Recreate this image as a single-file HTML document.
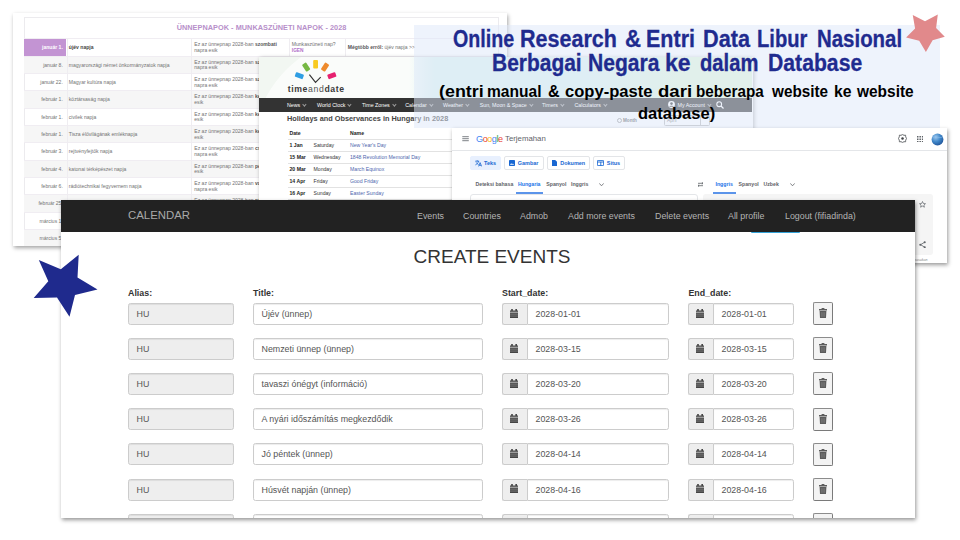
<!DOCTYPE html>
<html lang="id">
<head>
<meta charset="utf-8">
<title>Online Research &amp; Entri Data Libur Nasional</title>
<style>
*{box-sizing:border-box;margin:0;padding:0}
html,body{width:960px;height:540px;overflow:hidden;background:#fff}
body{position:relative;font-family:"Liberation Sans",sans-serif}
.abs{position:absolute}
.shot{position:absolute;background:#fff;overflow:hidden}

/* ---------- Hungarian table screenshot ---------- */
#hu{left:13px;top:13px;width:494px;height:233px;box-shadow:1px 1.500px 4px rgba(0,0,0,.36)}
#hu span,#hu div{position:absolute}
#hu .frame{left:10.8px;top:4.2px;width:475px;height:260px;border:1px solid #ecebee}
#hu .ttl{left:0;width:497px;top:9.5px;text-align:center;font-size:7.3px;line-height:10px;font-weight:bold;color:#b78fca;letter-spacing:.05px;white-space:nowrap}
#hu .row{left:11.3px;width:474px;height:17.35px;border-top:1px solid #f0edf2}
#hu .row.g{background:#f6f6f6}
#hu .row span{font-size:5.05px;color:#727272;white-space:nowrap;line-height:5.7px}
#hu .row b{font-weight:bold;color:#555}
#hu .c1{right:435.5px;top:6px;text-align:right}
#hu .c2{left:44.5px;top:6px}
#hu .c3{left:170px;top:3px}
#hu .c4{left:267.5px;top:3px}
#hu .c5{left:323.5px;top:6px}
#hu .vl{top:26px;height:240px;width:1px;background:#efedf1}
/* ---------- timeanddate screenshot ---------- */
#tad{left:259px;top:57px;width:493.500px;height:160px;box-shadow:.5px 1px 4px rgba(0,0,0,.34)}

/* ---------- title overlay ---------- */
#ov{left:414px;top:25px;width:526px;height:102.500px;background:rgba(222,232,250,.52)}

/* ---------- google translate ---------- */
#gt{left:452px;top:128px;width:495px;height:135px;box-shadow:1px 1.5px 4px rgba(0,0,0,.4)}

/* ---------- main panel ---------- */
#main{left:61px;top:200px;width:854px;height:318px;box-shadow:1px 1.5px 4px rgba(0,0,0,.42)}

#main .nav{position:absolute;left:0;top:0;width:100%;height:32px;background:#222}
#main .nav span{position:absolute;top:0;height:32px;line-height:32px;font-size:8.85px;color:#b4b4b4;white-space:nowrap}
#main .nav .brand{left:67px;font-size:11.4px;color:#a8a8a8;line-height:31px}
#main h2{position:absolute;left:0;width:100%;top:45px;text-align:center;font-weight:normal;font-size:19px;line-height:24px;color:#333;padding-left:8px}
#main .lb{position:absolute;top:88px;font-size:8.85px;font-weight:bold;color:#333;line-height:10px}
#main .in{position:absolute;height:22px;border:1px solid #ccc;border-radius:2.5px;background:#fff;font-size:8.85px;color:#555;line-height:20px;padding-left:7.5px;white-space:nowrap;box-shadow:inset 0 1px 1px rgba(0,0,0,.075)}
#main .in.dis{background:#eee}
#main .ad{position:absolute;height:22px;width:25px;border:1px solid #ccc;border-right:0;border-radius:2.5px 0 0 2.5px;background:#eee}
#main .in.r{border-radius:0 2.5px 2.5px 0}
#main .ad svg{position:absolute;left:6.8px;top:4.8px}
#main .bt{position:absolute;left:752px;width:20px;height:23px;border:1.4px solid #8c8c8c;border-radius:2px;background:#f3f3f3;border-bottom-color:#7a7a7a;border-right-color:#7a7a7a}
#main .bt svg{position:absolute;left:4.700px;top:5.100px}

/* ---------- title + stars ---------- */
.t1,.t2{position:absolute;left:414px;width:525px;text-align:center;white-space:nowrap;font-weight:bold}
.t1{font-size:22.3px;line-height:23px;color:#1f2b8f;letter-spacing:-.5px}
.t2{font-size:17px;line-height:21px;color:#000;letter-spacing:-.3px}
.w1,.w2{position:absolute;white-space:nowrap;font-weight:bold;transform-origin:0 0;display:block}
.w1{font-size:23px;line-height:23px;color:#1f2b8f;-webkit-text-stroke:.3px #1f2b8f}
.w2{font-size:16.5px;line-height:21px;color:#000}
#stars{position:absolute;left:0;top:0}

#gt span,#gt div,#gt svg{position:absolute}
#gt .t{white-space:nowrap;line-height:10px}
#gt .btn{height:13.5px;top:28px;border:1px solid #e3e5e8;border-radius:2px;background:#fff}
#gt .btn b{position:absolute;top:1.2px;font-size:5.45px;line-height:10px;color:#1967d2;font-weight:bold;white-space:nowrap}
#gt .lg{font-size:5.2px;color:#5f6368;top:50.6px;font-weight:bold}

#tad span,#tad div,#tad svg{position:absolute}
#tad .hd{left:0;top:0;width:493px;height:41px;background:linear-gradient(90deg,rgba(222,244,240,0) 150px,#def4f0 175px,#def4f0 330px,#e3f8dc 420px,#e3f8dc 100%),radial-gradient(circle 117px at 110px 95px,#fafcfa 99.4%,#f2f7f2 100%)}
#tad .nv{left:0;top:40.7px;width:493px;height:14px;background:#333}
#tad .nv span{top:0;line-height:14px;font-size:5.3px;color:#fff;white-space:nowrap}
#tad .nv span:after{content:"";display:inline-block;width:1.8px;height:1.8px;border-right:.5px solid #999;border-bottom:.5px solid #999;transform:rotate(45deg);margin-left:3px;position:relative;top:-1.3px}
#tad .h1{left:28px;top:57px;font-size:7.35px;font-weight:bold;color:#454545;line-height:10px;white-space:nowrap}
#tad .tr{left:28.500px;width:440px;height:1px;background:#e2e2e2}
#tad .td{font-size:5.15px;line-height:8px;color:#333;white-space:nowrap}
#tad .td.b{font-weight:bold;color:#222}
#tad .td.a{color:#4d66ad}
</style>
</head>
<body>

<div id="hu" class="shot"><div class="frame"></div>
<span class="ttl">ÜNNEPNAPOK - MUNKASZÜNETI NAPOK - 2028</span>
<div class="row" style="top:25.30px"><div style="left:0;top:0;width:42px;height:17px;background:#c394d3"></div><span class="c1" style="color:#fff;font-weight:bold">január 1.</span><span class="c4">Munkaszüneti nap?<br><span style="position:static;color:#b070c8;font-weight:bold;font-size:4.8px">IGEN</span></span><span class="c5"><b>Mégtöbb erről:</b> újév napja &gt;&gt;</span><span class="c2"><b style="color:#444">újév napja</b></span><span class="c3">Ez az ünnepnap 2028-ban <b>szombati</b><br>napra esik</span></div>
<div class="row g" style="top:42.63px"><span class="c1">január 8.</span><span class="c2">magyarországi német önkormányzatok napja</span><span class="c3">Ez az ünnepnap 2028-ban <b>szombati</b><br>napra esik</span></div>
<div class="row" style="top:59.96px"><span class="c1">január 22.</span><span class="c2">Magyar kultúra napja</span><span class="c3">Ez az ünnepnap 2028-ban <b>szombati</b><br>napra esik</span></div>
<div class="row g" style="top:77.29px"><span class="c1">február 1.</span><span class="c2">köztársaság napja</span><span class="c3">Ez az ünnepnap 2028-ban <b>keddi</b> napra<br>esik</span></div>
<div class="row" style="top:94.62px"><span class="c1">február 1.</span><span class="c2">civilek napja</span><span class="c3">Ez az ünnepnap 2028-ban <b>keddi</b> napra<br>esik</span></div>
<div class="row g" style="top:111.95px"><span class="c1">február 1.</span><span class="c2">Tisza élővilágának emléknapja</span><span class="c3">Ez az ünnepnap 2028-ban <b>keddi</b> napra<br>esik</span></div>
<div class="row" style="top:129.28px"><span class="c1">február 3.</span><span class="c2">rejtvényfejtők napja</span><span class="c3">Ez az ünnepnap 2028-ban <b>csütörtöki</b><br>napra esik</span></div>
<div class="row g" style="top:146.61px"><span class="c1">február 4.</span><span class="c2">katonai térképészet napja</span><span class="c3">Ez az ünnepnap 2028-ban <b>pénteki</b> napra<br>esik</span></div>
<div class="row" style="top:163.94px"><span class="c1">február 6.</span><span class="c2">rádiótechnikai fegyvernem napja</span><span class="c3">Ez az ünnepnap 2028-ban <b>vasárnapi</b><br>napra esik</span></div>
<div class="row g" style="top:181.27px"><span class="c1">február 25.</span><span class="c2">a kommunista diktatúrák áldozatainak emléknapja</span><span class="c3">Ez az ünnepnap 2028-ban <b>pénteki</b> napra<br>esik</span></div>
<div class="row" style="top:198.60px"><span class="c1">március 1.</span><span class="c2">a polgári védelem napja</span><span class="c3">Ez az ünnepnap 2028-ban <b>szerdai</b><br>napra esik</span></div>
<div class="row g" style="top:215.93px"><span class="c1">március 5.</span><span class="c2">energiatakarékossági világnap</span><span class="c3">Ez az ünnepnap 2028-ban <b>vasárnapi</b><br>napra esik</span></div>
<div class="vl" style="left:54px"></div>
<div class="vl" style="left:178.200px"></div>
<div class="vl" style="left:276px"></div>
<div class="vl" style="left:332px"></div></div>
<div id="tad" class="shot"><div class="hd"></div>
<svg style="left:0;top:0" width="120" height="41" viewBox="0 0 120 41"><g transform="translate(56.6 24.6)"><rect x="-2.4" y="-4.2" width="4.8" height="8.4" rx=".9" fill="#2f9ee3" transform="rotate(-70) translate(0 -17.3)"/><rect x="-2.4" y="-4.2" width="4.8" height="8.4" rx=".9" fill="#76b843" transform="rotate(-33) translate(0 -17.3)"/><rect x="-2.4" y="-4.2" width="4.8" height="8.4" rx=".9" fill="#f8ca1f" transform="rotate(0) translate(0 -17.3)"/><rect x="-2.4" y="-4.2" width="4.8" height="8.4" rx=".9" fill="#ee8a2c" transform="rotate(33) translate(0 -17.3)"/><rect x="-2.4" y="-4.2" width="4.8" height="8.4" rx=".9" fill="#e6216f" transform="rotate(70) translate(0 -17.3)"/><path d="M-6.2 -7L-.1 .7L5.100 -4.500" fill="none" stroke="#333" stroke-width="1.150"/></g></svg>
<span style="left:28.700px;top:27.300px;font-size:8.700px;line-height:11px;color:#3a3a3a;white-space:nowrap;letter-spacing:.62px"><b style="position:static">time</b><span style="position:static;color:#555">and</span><b style="position:static">date</b></span>
<div class="nv"><span style="left:28px">News</span><span style="left:58px">World Clock</span><span style="left:103px">Time Zones</span><span style="left:146.2px">Calendar</span><span style="left:184px">Weather</span><span style="left:220.7px">Sun, Moon &amp; Space</span><span style="left:283px">Timers</span><span style="left:315.5px">Calculators</span><svg style="left:408.5px;top:3.500px" width="7" height="7" viewBox="0 0 7 7"><circle cx="3.5" cy="3.500" r="3.400" fill="#fff"/><circle cx="3.500" cy="2.600" r="1.300" fill="#333"/><path d="M1.200 5.800c.5-1.300 4.100-1.300 4.600 0" fill="#333"/></svg><span style="left:418.500px">My Account</span><svg style="left:457px;top:3px" width="8" height="8" viewBox="0 0 8 8"><circle cx="3.200" cy="3.200" r="2.400" fill="none" stroke="#fff" stroke-width="1.100"/><path d="M5 5l2.500 2.500" stroke="#fff" stroke-width="1.300"/></svg></div>
<span class="h1">Holidays and Observances in Hungary in 2028</span>
<span class="td b" style="left:30.5px;top:72px">Date</span><span class="td b" style="left:91px;top:72px">Name</span>
<div style="left:357.5px;top:61px;width:5px;height:5px;border:.7px solid #999;border-radius:50%"></div><span class="td b" style="left:364px;top:59.500px;font-size:4.600px;color:#555">Month</span>
<div style="left:405px;top:58px;width:46px;height:11px;border:.7px solid #bbb;border-radius:1.500px"></div><span class="td" style="left:408px;top:60px;font-size:4.800px;color:#777">April</span><div style="left:441px;top:58px;width:.7px;height:11px;background:#bbb"></div>
<div class="tr" style="top:81.5px"></div><span class="td b" style="left:30.500px;top:84.0px">1 Jan</span><span class="td" style="left:54.500px;top:84.0px">Saturday</span><span class="td a" style="left:91px;top:84.0px">New Year's Day</span>
<div class="tr" style="top:93.6px"></div><span class="td b" style="left:30.500px;top:96.1px">15 Mar</span><span class="td" style="left:54.500px;top:96.1px">Wednesday</span><span class="td a" style="left:91px;top:96.1px">1848 Revolution Memorial Day</span>
<div class="tr" style="top:105.7px"></div><span class="td b" style="left:30.500px;top:108.2px">20 Mar</span><span class="td" style="left:54.500px;top:108.2px">Monday</span><span class="td a" style="left:91px;top:108.2px">March Equinox</span>
<div class="tr" style="top:117.8px"></div><span class="td b" style="left:30.500px;top:120.3px">14 Apr</span><span class="td" style="left:54.500px;top:120.3px">Friday</span><span class="td a" style="left:91px;top:120.3px">Good Friday</span>
<div class="tr" style="top:129.9px"></div><span class="td b" style="left:30.500px;top:132.4px">16 Apr</span><span class="td" style="left:54.500px;top:132.4px">Sunday</span><span class="td a" style="left:91px;top:132.4px">Easter Sunday</span>
<div class="tr" style="top:142px"></div></div>
<div id="ov" class="abs"></div>
<div id="gt" class="shot">
<svg style="left:10px;top:8px" width="8" height="6" viewBox="0 0 8 6"><path stroke="#767a7f" stroke-width=".95" d="M.3 .7h6.500M.3 2.700h6.500M.3 4.700h6.500"/></svg>
<span class="t" style="left:24px;top:5.5px;font-size:9.1px;letter-spacing:-.45px"><span style="position:static;color:#4285f4">G</span><span style="position:static;color:#ea4335">o</span><span style="position:static;color:#fbbc05">o</span><span style="position:static;color:#4285f4">g</span><span style="position:static;color:#34a853">l</span><span style="position:static;color:#ea4335">e</span></span>
<span class="t" style="left:53px;top:5.6px;font-size:7.8px;color:#5f6368">Terjemahan</span>
<div style="left:0;top:21.5px;width:495px;height:1px;background:#e4e6e9"></div>
<div class="btn" style="left:18px;width:31px;background:#e8f0fe;border-color:#e8f0fe"><svg style="left:4px;top:3px" width="7" height="6.5" viewBox="0 0 7 6.5"><path fill="none" stroke="#1967d2" stroke-width=".8" d="M.2 1.2h4M2.2 .2v1M3.6 1.2C3.2 3 1.8 4.2 .4 4.9M1.2 2.4c.5 1 1.4 1.7 2.4 2.2M3.6 6.4l1.5-3.8 1.5 3.8M4.1 5.3h2"/></svg><b style="left:13px">Teks</b></div>
<div class="btn" style="left:52px;width:39.5px"><svg style="left:4.200px;top:3px" width="6" height="6" viewBox="0 0 6 6"><rect width="6" height="6" rx=".8" fill="#1967d2"/><path fill="#fff" d="M.9 4.8l1.3-1.6 1 1.1.7-.8 1.2 1.3z"/></svg><b style="left:12.800px">Gambar</b></div>
<div class="btn" style="left:94.5px;width:43px"><svg style="left:4.300px;top:2.600px" width="5" height="6.5" viewBox="0 0 5 6.5"><path fill="#1967d2" d="M0 0h3.2L5 1.8v4.7H0z"/></svg><b style="left:12.800px">Dokumen</b></div>
<div class="btn" style="left:140.5px;width:32.5px"><svg style="left:3.800px;top:3px" width="7" height="6" viewBox="0 0 7 6"><rect x=".4" y=".4" width="6.2" height="5.2" rx=".7" fill="none" stroke="#1967d2" stroke-width=".9"/><path stroke="#1967d2" stroke-width=".9" d="M.4 2h6.2M3.8 2v3.6"/></svg><b style="left:13.300px">Situs</b></div>
<span class="t lg" style="left:23.5px">Deteksi bahasa</span>
<span class="t lg" style="left:66px;color:#1a73e8">Hungaria</span>
<span class="t lg" style="left:94.3px">Spanyol</span>
<span class="t lg" style="left:119px">Inggris</span>
<svg style="left:147px;top:55px" width="5" height="3.5" viewBox="0 0 5 3.5"><path fill="none" stroke="#5f6368" stroke-width=".8" d="M.3.4l2.2 2.4L4.7.4"/></svg>
<div style="left:63.5px;top:64.3px;width:27.5px;height:1.3px;background:#5b94ea"></div>
<div style="left:18px;top:66px;width:228px;height:70px;border:1px solid #e4e6e9;border-radius:3px"></div>
<svg style="left:245px;top:54px" width="7" height="5" viewBox="0 0 7 5"><path fill="none" stroke="#5f6368" stroke-width=".8" d="M1 1.3h5M4.8 .2l1.2 1.1-1.2 1.1M6 3.7H1M2.2 2.6L1 3.7l1.2 1.1"/></svg>
<span class="t lg" style="left:263.5px;color:#1a73e8">Inggris</span>
<span class="t lg" style="left:286.6px">Spanyol</span>
<span class="t lg" style="left:311.5px">Uzbek</span>
<svg style="left:338px;top:55px" width="5" height="3.5" viewBox="0 0 5 3.5"><path fill="none" stroke="#5f6368" stroke-width=".8" d="M.3.4l2.2 2.4L4.7.4"/></svg>
<div style="left:261px;top:64.3px;width:22.7px;height:1.3px;background:#5b94ea"></div>
<div style="left:251px;top:66px;width:229.5px;height:60.7px;background:#f5f5f5;border-radius:3px"></div>
<svg style="left:446.4px;top:6.2px" width="9" height="9" viewBox="0 0 9 9"><path d="M4.5 .6L6 1.300L7.600 1.200L7.700 2.800L8.500 4.500L7.700 6.200L7.600 7.800L6 7.700L4.500 8.400L3 7.700L1.400 7.800L1.300 6.200L.5 4.500L1.300 2.800L1.400 1.200L3 1.300Z" fill="none" stroke="#5a5d61" stroke-width=".9" stroke-linejoin="round"/><circle cx="4.500" cy="4.500" r="1.250" fill="#3c3f43"/></svg>
<svg style="left:465px;top:7.800px" width="6.400" height="6.400" viewBox="0 0 6.400 6.400"><path fill="#5f6368" d="M0 0h1.500v1.500H0zM2.450 0h1.500v1.500H2.450zM4.900 0H6.400v1.500H4.900zM0 2.450h1.500v1.500H0zM2.450 2.450h1.500v1.500H2.450zM4.900 2.450H6.400v1.500H4.900zM0 4.900h1.500V6.400H0zM2.450 4.900h1.500V6.400H2.450zM4.900 4.900H6.400V6.400H4.900z"/></svg>
<svg style="left:478.800px;top:4.500px" width="13" height="13" viewBox="0 0 13 13"><defs><radialGradient id="gl" cx=".35" cy=".3" r=".8"><stop offset="0" stop-color="#9cc7ee"/><stop offset=".5" stop-color="#3f86c8"/><stop offset="1" stop-color="#1d4f94"/></radialGradient></defs><circle cx="6.5" cy="6.5" r="5.900" fill="url(#gl)"/><path d="M1.500 4.500C4 3 8 5.500 11.800 4.200" stroke="#8ec0ee" stroke-width=".8" fill="none" opacity=".6"/></svg>
<svg style="left:466.5px;top:72.5px" width="7" height="7" viewBox="0 0 7 7"><path fill="none" stroke="#5f6368" stroke-width=".7" d="M3.5.5l.9 2 2.1.2-1.6 1.4.5 2.1-1.9-1.1-1.9 1.1.5-2.1L.5 2.7l2.100-.2z"/></svg>
<svg style="left:466.5px;top:112.5px" width="7" height="7.500" viewBox="0 0 7 7.500"><path fill="none" stroke="#5f6368" stroke-width=".8" d="M5.600 1.300L1.500 3.700l4.100 2.400"/><circle cx="5.700" cy="1.200" r="1.050" fill="#5f6368"/><circle cx="1.300" cy="3.700" r="1.050" fill="#5f6368"/><circle cx="5.700" cy="6.200" r="1.050" fill="#5f6368"/></svg>
<span class="t" style="left:461px;top:126.5px;font-size:3.6px;color:#888;font-style:italic">masukan</span>
</div>
<div id="main" class="shot">
<div class="nav"><span class="brand">CALENDAR</span><span style="left:356px">Events</span><span style="left:402px">Countries</span><span style="left:459px">Admob</span><span style="left:507px">Add more events</span><span style="left:594px">Delete events</span><span style="left:667px">All profile</span><span style="left:724px">Logout (fifiadinda)</span></div>
<div style="position:absolute;left:690px;top:31.500px;width:49px;height:1.600px;background:#35a3d8;border-radius:0 0 2px 2px"></div>
<h2>CREATE EVENTS</h2>
<span class="lb" style="left:67px">Alias:</span><span class="lb" style="left:192px">Title:</span><span class="lb" style="left:441px">Start_date:</span><span class="lb" style="left:627.400px">End_date:</span>
<div class="in dis" style="left:67px;top:103.0px;width:106px">HU</div><div class="in" style="left:192px;top:103.0px;width:230px">Újév (ünnep)</div><div class="ad" style="left:441px;top:103.0px"><svg width="8.2" height="9.2" viewBox="0 0 9 10"><path fill="#454545" d="M0 1.700h9V10H0zM1.300 0h1.800v2.500H1.300zM5.900 0h1.800v2.500H5.900z"/><path stroke="#eee" stroke-width=".8" d="M0 3.500h9"/><path stroke="#eee" stroke-width=".5" d="M0 5.600h9M0 7.700h9" opacity=".7"/></svg></div><div class="in r" style="left:466px;top:103.0px;width:142px">2028-01-01</div><div class="ad" style="left:627px;top:103.0px"><svg width="8.2" height="9.2" viewBox="0 0 9 10"><path fill="#454545" d="M0 1.700h9V10H0zM1.300 0h1.800v2.500H1.300zM5.900 0h1.800v2.500H5.900z"/><path stroke="#eee" stroke-width=".8" d="M0 3.500h9"/><path stroke="#eee" stroke-width=".5" d="M0 5.600h9M0 7.700h9" opacity=".7"/></svg></div><div class="in r" style="left:652px;top:103.0px;width:81px">2028-01-01</div><div class="bt" style="top:102.2px"><svg width="8" height="10" viewBox="0 0 8 10"><path fill="#5c5c5c" d="M2.6 0h2.8v1H8v1.400H0V1h2.600zM.600 3h6.800l-.4 7H1z"/><path stroke="#9a9a9a" stroke-width=".4" d="M2.700 4.200v4.600M4 4.200v4.600M5.300 4.200v4.600"/></svg></div>
<div class="in dis" style="left:67px;top:138.1px;width:106px">HU</div><div class="in" style="left:192px;top:138.1px;width:230px">Nemzeti ünnep (ünnep)</div><div class="ad" style="left:441px;top:138.1px"><svg width="8.2" height="9.2" viewBox="0 0 9 10"><path fill="#454545" d="M0 1.700h9V10H0zM1.300 0h1.800v2.500H1.300zM5.900 0h1.800v2.500H5.900z"/><path stroke="#eee" stroke-width=".8" d="M0 3.500h9"/><path stroke="#eee" stroke-width=".5" d="M0 5.600h9M0 7.700h9" opacity=".7"/></svg></div><div class="in r" style="left:466px;top:138.1px;width:142px">2028-03-15</div><div class="ad" style="left:627px;top:138.1px"><svg width="8.2" height="9.2" viewBox="0 0 9 10"><path fill="#454545" d="M0 1.700h9V10H0zM1.300 0h1.800v2.500H1.300zM5.900 0h1.800v2.500H5.900z"/><path stroke="#eee" stroke-width=".8" d="M0 3.500h9"/><path stroke="#eee" stroke-width=".5" d="M0 5.600h9M0 7.700h9" opacity=".7"/></svg></div><div class="in r" style="left:652px;top:138.1px;width:81px">2028-03-15</div><div class="bt" style="top:137.3px"><svg width="8" height="10" viewBox="0 0 8 10"><path fill="#5c5c5c" d="M2.6 0h2.8v1H8v1.400H0V1h2.600zM.600 3h6.800l-.4 7H1z"/><path stroke="#9a9a9a" stroke-width=".4" d="M2.700 4.200v4.600M4 4.200v4.600M5.300 4.200v4.600"/></svg></div>
<div class="in dis" style="left:67px;top:173.2px;width:106px">HU</div><div class="in" style="left:192px;top:173.2px;width:230px">tavaszi ónégyt (információ)</div><div class="ad" style="left:441px;top:173.2px"><svg width="8.2" height="9.2" viewBox="0 0 9 10"><path fill="#454545" d="M0 1.700h9V10H0zM1.300 0h1.800v2.500H1.300zM5.900 0h1.800v2.500H5.900z"/><path stroke="#eee" stroke-width=".8" d="M0 3.500h9"/><path stroke="#eee" stroke-width=".5" d="M0 5.600h9M0 7.700h9" opacity=".7"/></svg></div><div class="in r" style="left:466px;top:173.2px;width:142px">2028-03-20</div><div class="ad" style="left:627px;top:173.2px"><svg width="8.2" height="9.2" viewBox="0 0 9 10"><path fill="#454545" d="M0 1.700h9V10H0zM1.300 0h1.800v2.500H1.300zM5.900 0h1.800v2.500H5.900z"/><path stroke="#eee" stroke-width=".8" d="M0 3.500h9"/><path stroke="#eee" stroke-width=".5" d="M0 5.600h9M0 7.700h9" opacity=".7"/></svg></div><div class="in r" style="left:652px;top:173.2px;width:81px">2028-03-20</div><div class="bt" style="top:172.4px"><svg width="8" height="10" viewBox="0 0 8 10"><path fill="#5c5c5c" d="M2.6 0h2.8v1H8v1.400H0V1h2.600zM.600 3h6.800l-.4 7H1z"/><path stroke="#9a9a9a" stroke-width=".4" d="M2.700 4.200v4.600M4 4.200v4.600M5.300 4.200v4.600"/></svg></div>
<div class="in dis" style="left:67px;top:208.3px;width:106px">HU</div><div class="in" style="left:192px;top:208.3px;width:230px">A nyári időszámítás megkezdődik</div><div class="ad" style="left:441px;top:208.3px"><svg width="8.2" height="9.2" viewBox="0 0 9 10"><path fill="#454545" d="M0 1.700h9V10H0zM1.300 0h1.800v2.500H1.300zM5.900 0h1.800v2.500H5.900z"/><path stroke="#eee" stroke-width=".8" d="M0 3.500h9"/><path stroke="#eee" stroke-width=".5" d="M0 5.600h9M0 7.700h9" opacity=".7"/></svg></div><div class="in r" style="left:466px;top:208.3px;width:142px">2028-03-26</div><div class="ad" style="left:627px;top:208.3px"><svg width="8.2" height="9.2" viewBox="0 0 9 10"><path fill="#454545" d="M0 1.700h9V10H0zM1.300 0h1.800v2.500H1.300zM5.900 0h1.800v2.500H5.900z"/><path stroke="#eee" stroke-width=".8" d="M0 3.500h9"/><path stroke="#eee" stroke-width=".5" d="M0 5.600h9M0 7.700h9" opacity=".7"/></svg></div><div class="in r" style="left:652px;top:208.3px;width:81px">2028-03-26</div><div class="bt" style="top:207.5px"><svg width="8" height="10" viewBox="0 0 8 10"><path fill="#5c5c5c" d="M2.6 0h2.8v1H8v1.400H0V1h2.600zM.600 3h6.800l-.4 7H1z"/><path stroke="#9a9a9a" stroke-width=".4" d="M2.700 4.200v4.600M4 4.200v4.600M5.300 4.200v4.600"/></svg></div>
<div class="in dis" style="left:67px;top:243.4px;width:106px">HU</div><div class="in" style="left:192px;top:243.4px;width:230px">Jó péntek (ünnep)</div><div class="ad" style="left:441px;top:243.4px"><svg width="8.2" height="9.2" viewBox="0 0 9 10"><path fill="#454545" d="M0 1.700h9V10H0zM1.300 0h1.800v2.500H1.300zM5.900 0h1.800v2.500H5.900z"/><path stroke="#eee" stroke-width=".8" d="M0 3.500h9"/><path stroke="#eee" stroke-width=".5" d="M0 5.600h9M0 7.700h9" opacity=".7"/></svg></div><div class="in r" style="left:466px;top:243.4px;width:142px">2028-04-14</div><div class="ad" style="left:627px;top:243.4px"><svg width="8.2" height="9.2" viewBox="0 0 9 10"><path fill="#454545" d="M0 1.700h9V10H0zM1.300 0h1.800v2.500H1.300zM5.900 0h1.800v2.500H5.900z"/><path stroke="#eee" stroke-width=".8" d="M0 3.500h9"/><path stroke="#eee" stroke-width=".5" d="M0 5.600h9M0 7.700h9" opacity=".7"/></svg></div><div class="in r" style="left:652px;top:243.4px;width:81px">2028-04-14</div><div class="bt" style="top:242.6px"><svg width="8" height="10" viewBox="0 0 8 10"><path fill="#5c5c5c" d="M2.6 0h2.8v1H8v1.400H0V1h2.600zM.600 3h6.800l-.4 7H1z"/><path stroke="#9a9a9a" stroke-width=".4" d="M2.700 4.200v4.600M4 4.200v4.600M5.300 4.200v4.600"/></svg></div>
<div class="in dis" style="left:67px;top:278.5px;width:106px">HU</div><div class="in" style="left:192px;top:278.5px;width:230px">Húsvét napján (ünnep)</div><div class="ad" style="left:441px;top:278.5px"><svg width="8.2" height="9.2" viewBox="0 0 9 10"><path fill="#454545" d="M0 1.700h9V10H0zM1.300 0h1.800v2.500H1.300zM5.900 0h1.800v2.500H5.900z"/><path stroke="#eee" stroke-width=".8" d="M0 3.500h9"/><path stroke="#eee" stroke-width=".5" d="M0 5.600h9M0 7.700h9" opacity=".7"/></svg></div><div class="in r" style="left:466px;top:278.5px;width:142px">2028-04-16</div><div class="ad" style="left:627px;top:278.5px"><svg width="8.2" height="9.2" viewBox="0 0 9 10"><path fill="#454545" d="M0 1.700h9V10H0zM1.300 0h1.800v2.500H1.300zM5.900 0h1.800v2.500H5.900z"/><path stroke="#eee" stroke-width=".8" d="M0 3.500h9"/><path stroke="#eee" stroke-width=".5" d="M0 5.600h9M0 7.700h9" opacity=".7"/></svg></div><div class="in r" style="left:652px;top:278.5px;width:81px">2028-04-16</div><div class="bt" style="top:277.7px"><svg width="8" height="10" viewBox="0 0 8 10"><path fill="#5c5c5c" d="M2.6 0h2.8v1H8v1.400H0V1h2.600zM.600 3h6.800l-.4 7H1z"/><path stroke="#9a9a9a" stroke-width=".4" d="M2.700 4.200v4.600M4 4.200v4.600M5.300 4.200v4.600"/></svg></div>
<div class="in dis" style="left:67px;top:313.6px;width:106px"></div><div class="in" style="left:192px;top:313.6px;width:230px"></div><div class="ad" style="left:441px;top:313.6px"><svg width="8.2" height="9.2" viewBox="0 0 9 10"><path fill="#454545" d="M0 1.700h9V10H0zM1.300 0h1.800v2.500H1.300zM5.900 0h1.800v2.500H5.900z"/><path stroke="#eee" stroke-width=".8" d="M0 3.500h9"/><path stroke="#eee" stroke-width=".5" d="M0 5.600h9M0 7.700h9" opacity=".7"/></svg></div><div class="in r" style="left:466px;top:313.6px;width:142px"></div><div class="ad" style="left:627px;top:313.6px"><svg width="8.2" height="9.2" viewBox="0 0 9 10"><path fill="#454545" d="M0 1.700h9V10H0zM1.300 0h1.800v2.500H1.300zM5.900 0h1.800v2.500H5.900z"/><path stroke="#eee" stroke-width=".8" d="M0 3.500h9"/><path stroke="#eee" stroke-width=".5" d="M0 5.600h9M0 7.700h9" opacity=".7"/></svg></div><div class="in r" style="left:652px;top:313.6px;width:81px"></div><div class="bt" style="top:312.8px"><svg width="8" height="10" viewBox="0 0 8 10"><path fill="#5c5c5c" d="M2.6 0h2.8v1H8v1.400H0V1h2.600zM.600 3h6.800l-.4 7H1z"/><path stroke="#9a9a9a" stroke-width=".4" d="M2.700 4.200v4.600M4 4.200v4.600M5.300 4.200v4.600"/></svg></div>
</div>


<span class="w1" style="left:452.5px;top:28.1px;transform:scaleX(0.855)">Online</span><span class="w1" style="left:520.3px;top:28.1px;transform:scaleX(0.936)">Research</span><span class="w1" style="left:624.5px;top:28.1px;transform:scaleX(0.967)">&amp;</span><span class="w1" style="left:646.1px;top:28.1px;transform:scaleX(0.935)">Entri</span><span class="w1" style="left:702.8px;top:28.1px;transform:scaleX(0.943)">Data</span><span class="w1" style="left:757.1px;top:28.1px;transform:scaleX(0.876)">Libur</span><span class="w1" style="left:817.1px;top:28.1px;transform:scaleX(0.888)">Nasional</span>
<span class="w1" style="left:491.6px;top:51.5px;transform:scaleX(0.911)">Berbagai</span><span class="w1" style="left:588.3px;top:51.5px;transform:scaleX(0.917)">Negara</span><span class="w1" style="left:665.3px;top:51.5px;transform:scaleX(0.998)">ke</span><span class="w1" style="left:700.0px;top:51.5px;transform:scaleX(0.878)">dalam</span><span class="w1" style="left:767.8px;top:51.5px;transform:scaleX(0.921)">Database</span>
<span class="w2" style="left:439.2px;top:81.3px;transform:scaleX(1.084)">(entri</span><span class="w2" style="left:487.4px;top:81.3px;transform:scaleX(0.943)">manual</span><span class="w2" style="left:547.5px;top:81.3px;transform:scaleX(0.975)">&amp;</span><span class="w2" style="left:565.3px;top:81.3px;transform:scaleX(1.003)">copy-paste</span><span class="w2" style="left:658.3px;top:81.3px;transform:scaleX(1.125)">dari</span><span class="w2" style="left:695.8px;top:81.3px;transform:scaleX(0.922)">beberapa</span><span class="w2" style="left:772.4px;top:81.3px;transform:scaleX(0.926)">website</span><span class="w2" style="left:834.0px;top:81.3px;transform:scaleX(0.955)">ke</span><span class="w2" style="left:857.3px;top:81.3px;transform:scaleX(0.936)">website</span>
<span class="w2" style="left:638.3px;top:102.5px;transform:scaleX(1.002)">database)</span>
<svg id="stars" width="960" height="540" viewBox="0 0 960 540">
<polygon fill="#1f2a8d" points="78.7,254.7 77.5,277.5 97.5,289.5 75,295 69.5,316.7 57,297.5 33.7,298 48.3,281.3 38.8,260 60.8,269.2"/>
<polygon fill="#e1898b" points="912.75,14.9 925,21.2 937.8,14.6 936.1,28 944.8,36.75 932.6,40.25 925.9,51.9 919.2,40.8 906.1,37.6 915.1,28.6"/>
</svg>
</body>
</html>
